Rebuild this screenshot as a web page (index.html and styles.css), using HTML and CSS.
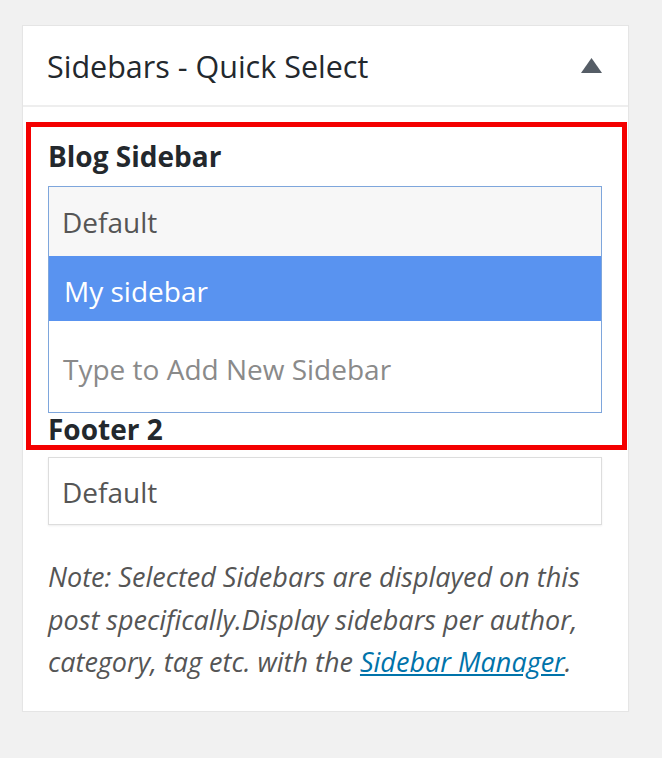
FILE: index.html
```html
<!DOCTYPE html>
<html>
<head>
<meta charset="utf-8">
<link rel="stylesheet" href="styles.css">
</head>
<body>
<div class="panel">
  <div class="panel-head">
    <span class="panel-title">Sidebars - Quick Select</span>
    <svg class="toggle" width="21" height="15" viewBox="0 0 21 15"><polygon points="10.5,0 21,15 0,15" fill="#555d66"/></svg>
  </div>
  <div class="highlight">
    <div class="label">Blog Sidebar</div>
    <div class="listbox">
      <div class="opt opt-current">Default</div>
      <div class="opt opt-active">My sidebar</div>
      <div class="opt-input">Type to Add New Sidebar</div>
    </div>
    <div class="label label-last">Footer 2</div>
  </div>
  <div class="select">Default</div>
  <p class="note">Note: Selected Sidebars are displayed on this post specifically.Display sidebars per author, category, tag etc. with the <a href="#">Sidebar Manager</a>.</p>
</div>
</body>
</html>
```
FILE: styles.css
```css
html, body {
  margin: 0;
  padding: 0;
  background: #f1f1f1;
}
body {
  font-family: "Open Sans", "Noto Sans", sans-serif;
  color: #23282d;
}
.panel {
  margin: 25px 0 0 22px;
  width: 605px;
  background: #fff;
  border: 1px solid #e5e5e5;
  box-shadow: 0 1px 1px rgba(0,0,0,0.04);
}
.panel-head {
  height: 79px;
  display: flex;
  align-items: center;
  justify-content: space-between;
  padding: 0 26px 0 24px;
  border-bottom: 2px solid #eeeeee;
}
.panel-title {
  font-size: 30.5px;
  color: #23282d;
}
.toggle {
  display: block;
}
.highlight {
  margin: 15px 1px 0 3px;
  border: 5px solid #f40000;
  padding: 14px 20px 1px 17px;
}
.label {
  font-size: 28px;
  font-weight: 700;
  line-height: 30px;
  color: #23282d;
}
.listbox {
  margin-top: 15px;
  border: 1px solid #7ea6dc;
  font-size: 28px;
}
.opt {
  padding-left: 13px;
  color: #555;
}
.opt-current {
  background: #f7f7f7;
  height: 68px;
  padding-top: 1px;
  line-height: 68px;
}
.opt-active {
  background: #5993f0;
  color: #fff;
  padding-left: 15px;
  height: 60px;
  padding-top: 5px;
  line-height: 60px;
}
.opt-input {
  padding: 5px 0 0 14px;
  line-height: 86px;
  height: 86px;
  color: #8a8a8a;
  background: #fff;
}
.label-last {
  margin-top: 1px;
}
.select {
  margin: 7px 26px 0 25px;
  border: 1px solid #dddddd;
  height: 64px;
  padding: 2px 0 0 13px;
  line-height: 64px;
  font-size: 28px;
  color: #555;
  box-shadow: 0 1px 2px rgba(0,0,0,0.07);
}
.note {
  margin: 31px 20px 0 25px;
  padding-bottom: 27px;
  font-size: 27px;
  font-style: italic;
  line-height: 42.5px;
  color: #555;
}
.note a {
  color: #0073aa;
  text-decoration: underline;
}
```
